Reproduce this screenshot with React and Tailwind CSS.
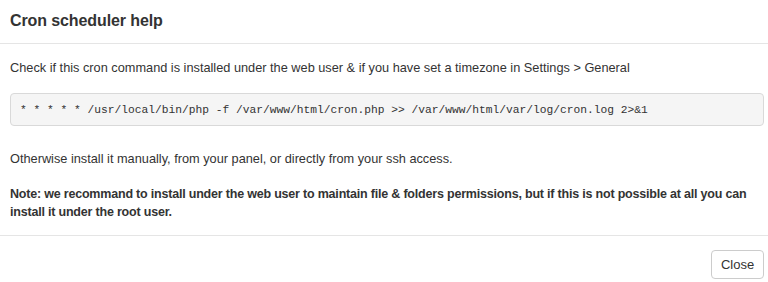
export default function App() {
  return (
    <div className="w-[768px] h-[282px] bg-white text-[#333] font-['Liberation_Sans',Arial,sans-serif] overflow-hidden">
      {/* Header */}
      <div className="h-[44px] px-[10px] pb-[2px] flex items-center border-b border-[#e5e5e5]">
        <h4 className="text-[16px] font-bold leading-none tracking-[-0.1px]">Cron scheduler help</h4>
      </div>

      {/* Body */}
      <div className="px-[10px] pt-[15px] pb-[14px] text-[12.75px] leading-[18px]">
        <p>Check if this cron command is installed under the web user &amp; if you have set a timezone in Settings &gt; General</p>
        <pre className="mt-[16px] mb-[24px] mr-[-6px] h-[33px] px-[9px] flex items-center bg-[#f5f5f5] border border-[#d9d9d9] rounded-[4px] font-['Liberation_Mono','Courier_New',monospace] text-[11.25px] text-[#333]">
          * * * * * /usr/local/bin/php -f /var/www/html/cron.php &gt;&gt; /var/www/html/var/log/cron.log 2&gt;&amp;1
        </pre>
        <p>Otherwise install it manually, from your panel, or directly from your ssh access.</p>
        <p className="mt-[17px] font-bold text-[12.5px] tracking-[-0.2px]">
          Note: we recommand to install under the web user to maintain file &amp; folders permissions, but if this is not possible at all you can install it under the root user.
        </p>
      </div>

      {/* Footer */}
      <div className="border-t border-[#e5e5e5] pr-[4px] pt-[14px] flex justify-end">
        <button className="h-[29px] w-[53px] bg-white border border-[#ccc] rounded-[4px] text-[13px] text-[#333]">
          Close
        </button>
      </div>
    </div>
  );
}
